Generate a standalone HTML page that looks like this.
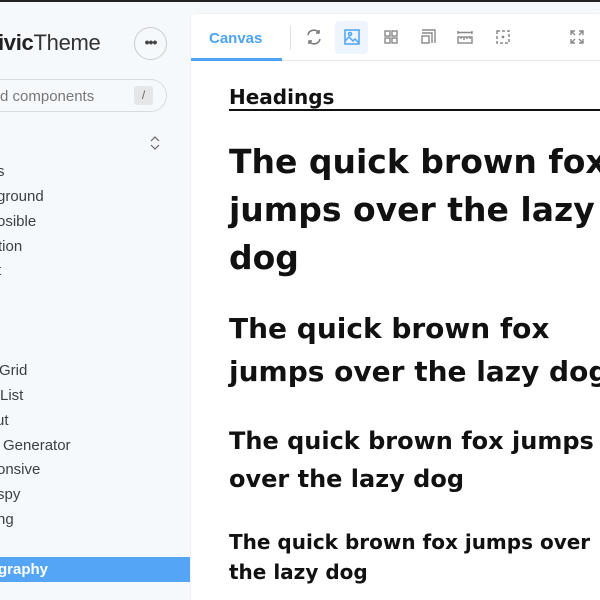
<!DOCTYPE html>
<html><head><meta charset="utf-8"><style>
*{margin:0;padding:0;box-sizing:border-box}
html,body{width:600px;height:600px;overflow:hidden}
body{background:#f6f9fc;font-family:"Liberation Sans",sans-serif;position:relative}
.topline{position:absolute;left:0;top:0;width:600px;height:2px;background:#222}
.logo{position:absolute;left:-2px;top:30px;font-size:22px;color:#333;letter-spacing:-0.3px}
.logo b{font-weight:700;color:#222}
.more{position:absolute;left:134px;top:27px;width:33px;height:33px;border:1px solid #ccc;border-radius:50%;text-align:center;line-height:28px;font-size:14px;color:#444;letter-spacing:-1px;font-weight:bold}
.search{position:absolute;left:-30px;top:79px;width:197px;height:33px;border:1px solid #d8dce0;border-radius:17px}
.search span{position:absolute;left:29px;top:8px;font-size:15px;color:#777}
.key{position:absolute;left:134px;top:86px;width:19px;height:19px;background:#e4e6e8;border-radius:3px;font-size:12px;color:#666;text-align:center;line-height:19px}
.side{position:absolute;left:0;font-size:15px;color:#3a4044}
.sel{position:absolute;left:0;top:557px;width:190px;height:25px;background:#54a5f6}
.sel span{position:absolute;left:0;top:4px;font-size:15px;font-weight:bold;color:#fff}
.panel{position:absolute;left:191px;top:14px;width:409px;height:586px;background:#fff;border-radius:5px 0 0 0;box-shadow:0 0 2px rgba(0,0,0,.08)}
.tb{position:absolute;left:0;top:0;width:409px;height:47px;border-bottom:1px solid #e6e8ea}
.tab{position:absolute;left:18px;top:16px;font-size:15px;font-weight:bold;color:#4da3f5}
.ul{position:absolute;left:0;top:44px;width:91px;height:3px;background:#4da3f5}
.sep{position:absolute;left:99px;top:12px;width:1px;height:24px;background:#e0e0e0}
.ic{position:absolute;top:13px}
.hsel{position:absolute;left:144px;top:7px;width:33px;height:33px;background:#eef5fe;border-radius:4px}
.clip{position:absolute;left:0;top:0;width:600px;height:600px;overflow:hidden}
.c{position:absolute;left:229px;color:#111;font-weight:bold;white-space:nowrap;font-family:"DejaVu Sans","Liberation Sans",sans-serif}
</style></head><body>
<div class="topline"></div>
<div class="logo"><b>ivic</b>Theme</div>
<div class="more">•••</div>
<div class="search"><span>d components</span></div>
<div class="key">/</div>
<svg style="position:absolute;left:149px;top:135px" width="12" height="16" viewBox="0 0 12 16" fill="none" stroke="#666" stroke-width="1.2"><path d="M2 6l4-4 4 4M2 10l4 4 4-4"/></svg>
<div class="side" style="top:163px;left:-3px">s</div>
<div class="side" style="top:188px;left:-3px">ground</div>
<div class="side" style="top:213px;left:-3px">osible</div>
<div class="side" style="top:238px;left:-2px">tion</div>
<div class="side" style="top:262px;left:-3px">t</div>
<div class="side" style="top:362px;left:-1px">Grid</div>
<div class="side" style="top:387px;left:0">List</div>
<div class="side" style="top:412px;left:-4px">ut</div>
<div class="side" style="top:437px;left:3px">Generator</div>
<div class="side" style="top:461px;left:-3px">onsive</div>
<div class="side" style="top:486px;left:-3px">spy</div>
<div class="side" style="top:511px;left:-3px">ng</div>
<div class="sel"><span style="left:-2px">graphy</span></div>
<div class="panel">
<div class="tb">
<div class="tab">Canvas</div><div class="ul"></div><div class="sep"></div>
<div class="hsel"></div>
<svg class="ic" style="left:113px" width="20" height="20" viewBox="0 0 20 20" fill="none" stroke="#777" stroke-width="1.5"><path d="M4 8a6 6 0 0 1 11-2M16 12a6 6 0 0 1-11 2"/><path d="M15 3v3h-3M5 17v-3h3"/></svg>
<svg class="ic" style="left:151px" width="20" height="20" viewBox="0 0 20 20" fill="none" stroke="#4da3f5" stroke-width="1.5"><rect x="3" y="3" width="14" height="14"/><circle cx="8" cy="7" r="1.5"/><path d="M3 14l4-4 4 4 2-2 4 4"/></svg>
<svg class="ic" style="left:190px" width="20" height="20" viewBox="0 0 20 20" fill="none" stroke="#888" stroke-width="1.4"><rect x="4" y="4" width="5" height="5"/><rect x="11" y="4" width="5" height="5"/><rect x="4" y="11" width="5" height="5"/><rect x="11" y="11" width="5" height="5"/></svg>
<svg class="ic" style="left:227px" width="20" height="20" viewBox="0 0 20 20" fill="none" stroke="#888" stroke-width="1.4"><rect x="4" y="9" width="7" height="7"/><path d="M4 6h10v10M4 3h13v13"/></svg>
<svg class="ic" style="left:264px" width="20" height="20" viewBox="0 0 20 20" fill="none" stroke="#888" stroke-width="1.4"><path d="M3 4v3M17 4v3M3 5.5h14"/><rect x="3" y="10" width="14" height="6"/><path d="M6 10v2M9 10v3M12 10v2M15 10v2"/></svg>
<svg class="ic" style="left:302px" width="20" height="20" viewBox="0 0 20 20" fill="none" stroke="#888" stroke-width="1.5" stroke-dasharray="3 2"><rect x="4" y="4" width="12" height="12"/><circle cx="10" cy="10" r=".6" fill="#888" stroke-dasharray="none"/></svg>
<svg class="ic" style="left:376px" width="20" height="20" viewBox="0 0 20 20" fill="none" stroke="#888" stroke-width="1.4"><path d="M4 8V4h4M4 4l4 4M16 8V4h-4M16 4l-4 4M4 12v4h4M4 16l4-4M16 12v4h-4M16 16l-4-4"/></svg>
</div>
</div>
<div class="clip">
<div class="c" style="top:85px;font-size:20px">Headings</div>
<div style="position:absolute;left:229px;top:109px;width:371px;height:1.5px;background:#111"></div>
<div class="c" style="top:138px;font-size:33px;line-height:48px">The quick brown fox<br>jumps over the lazy<br>dog</div>
<div class="c" style="top:307px;font-size:28px;line-height:43px">The quick brown fox<br>jumps over the lazy dog</div>
<div class="c" style="top:422px;font-size:24px;line-height:38px">The quick brown fox jumps<br>over the lazy dog</div>
<div class="c" style="top:527px;font-size:20px;line-height:30px">The quick brown fox jumps over<br>the lazy dog</div>
</div>
</body></html>
